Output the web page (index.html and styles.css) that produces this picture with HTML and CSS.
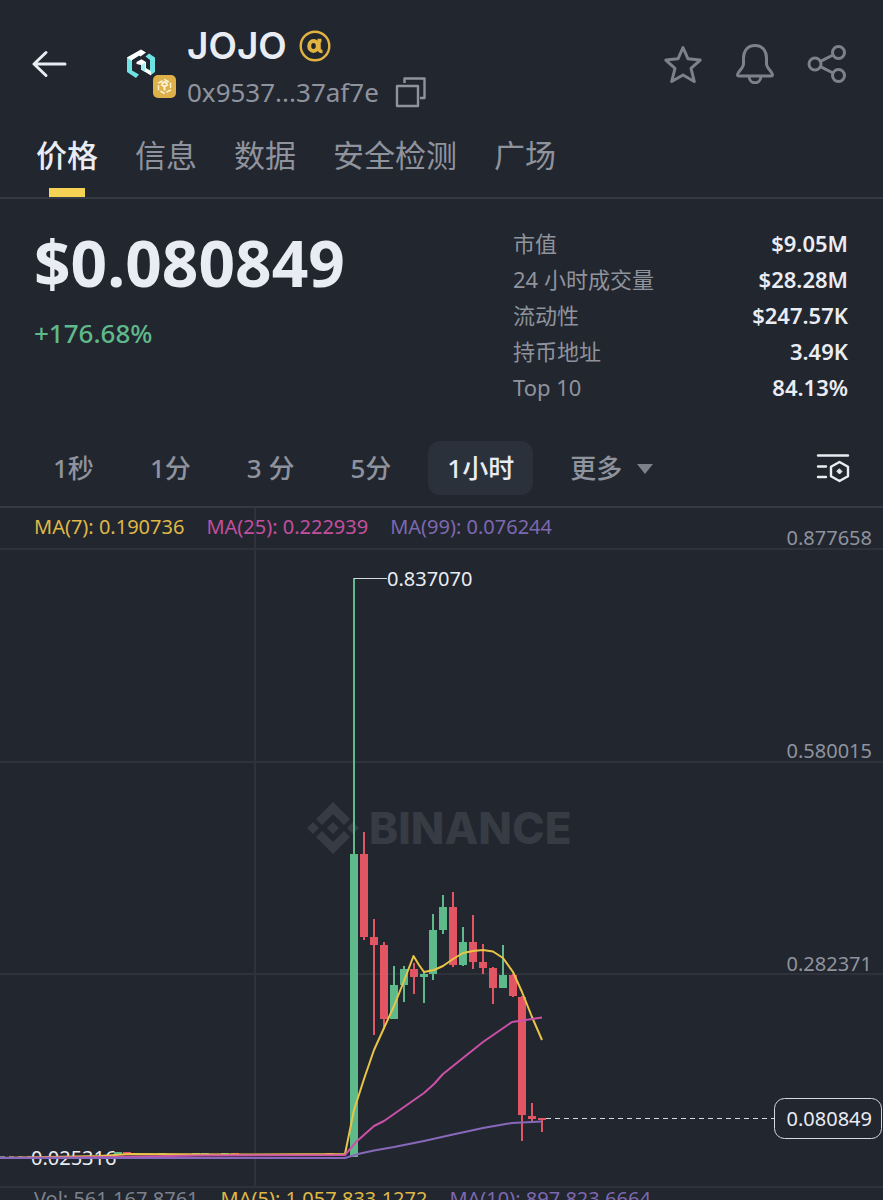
FILE: index.html
```html
<!DOCTYPE html>
<html lang="zh-CN">
<head>
  <meta charset="UTF-8" />
  <meta name="viewport" content="width=device-width, initial-scale=1" />
  <title>JOJO 价格</title>
  <link rel="stylesheet" href="styles.css">
</head>
<body>
  <header class="header">
    <button class="icon-btn" aria-label="返回">
      <svg width="36" height="32" viewBox="0 0 36 32" fill="none" stroke="#eaecf4" stroke-width="3" stroke-linecap="round" stroke-linejoin="round">
        <path d="M34 16H3M15 4.500L3 16l12 11.500"/>
      </svg>
    </button>

    <div class="token-logo">
      <svg width="28" height="30" viewBox="0 0 28 30">
        <path d="M0 8.500L14 1l3 2.500L5 11v10.500l7 4-3 3.500L0 23z" fill="#6fe3e4"/>
        <path d="M0 8.500L14 .5l5 3-5.500 4L12 6.500 5 11v1z" fill="#fff"/>
        <path d="M18.500 7.500l3.500-3 6 4v14.500l-4 3-5-3.500V20l4 1V11z" fill="#6fe3e4"/>
        <path d="M9.500 13l5-2.800 4.500 2.800v6l5 3.500v4L14 20.500V16l-4.500-1z" fill="#fff"/>
        <path d="M14 16v4.500l4 2.500V13.500z" fill="#a9eff0"/>
      </svg>
      <svg class="chain-badge" width="23" height="23" viewBox="0 0 23 23">
        <rect width="23" height="23" rx="5" fill="#ddb04a"/>
        <g fill="none" stroke="#fdf3d3" stroke-width="1.500">
          <path d="M11.500 4.500l6 3.500v7l-6 3.500-6-3.500V8z" stroke-dasharray="5 1.900"/>
          <path d="M8 9.500l3.500 2 3.500-2M11.500 11.500v4M8.500 8.500l3-1.500 3 1.500" stroke-width="2"/>
        </g>
      </svg>
    </div>

    <div class="token">
      <div class="token-name">
        <h1>JOJO</h1>
        <svg width="32" height="32" viewBox="0 0 32 32" fill="none" stroke="#e3b341">
          <circle cx="16" cy="16" r="14.300" stroke-width="2.400"/>
          <ellipse cx="14.500" cy="16" rx="4.300" ry="5" stroke-width="4"/>
          <path d="M18.500 10.500h4M20 10v8.500c0 2 1 3 3.500 3" stroke-width="3.500"/>
        </svg>
      </div>
      <div class="token-address">
        <span>0x9537...37af7e</span>
        <button class="icon-btn" aria-label="复制地址">
          <svg width="32" height="32" viewBox="0 0 32 32" fill="none" stroke="#8f939e" stroke-width="2.400" stroke-linejoin="round">
            <rect x="2" y="10" width="21" height="20"/>
            <path d="M9.500 7V2.500h20V22H25"/>
          </svg>
        </button>
      </div>
    </div>

    <div class="actions">
      <button class="icon-btn" aria-label="收藏">
        <svg width="40" height="40" viewBox="0 0 40 40">
          <path d="M20 3.500l5 11.300 12.200 1.300-9.200 8.200 3.300 13.200L20 31 8.700 37.500 12 24.300 2.800 16.100 15 14.800z"/>
        </svg>
      </button>
      <button class="icon-btn" aria-label="提醒">
        <svg width="40" height="40" viewBox="0 0 40 40">
          <path d="M20 1.500C12.500 1.500 8.500 7 8.500 14v6c0 4-6 8-6 10.500 0 1 .5 1.500 1.500 1.500h32c1 0 1.500-.5 1.500-1.500 0-2.500-6-6.500-6-10.500v-6C31.500 7 27.500 1.500 20 1.500zM14 32c0 9 12 9 12 0"/>
        </svg>
      </button>
      <button class="icon-btn" aria-label="分享">
        <svg width="40" height="40" viewBox="0 0 40 40">
          <circle cx="8" cy="20" r="6"/>
          <circle cx="31.500" cy="8.500" r="6"/>
          <circle cx="31.500" cy="31.500" r="6"/>
          <path d="M13.500 17.300l12.500-6.300M13.500 22.700L26 29"/>
        </svg>
      </button>
    </div>
  </header>

  <nav class="tabs">
    <a href="#price" class="active">价格</a>
    <a href="#info">信息</a>
    <a href="#data">数据</a>
    <a href="#audit">安全检测</a>
    <a href="#square">广场</a>
  </nav>

  <section class="summary">
    <div>
      <div class="price">$0.080849</div>
      <div class="change">+176.68%</div>
    </div>
    <dl class="stats">
      <div><dt>市值</dt><dd>$9.05M</dd></div>
      <div><dt>24 小时成交量</dt><dd>$28.28M</dd></div>
      <div><dt>流动性</dt><dd>$247.57K</dd></div>
      <div><dt>持币地址</dt><dd>3.49K</dd></div>
      <div><dt>Top 10</dt><dd>84.13%</dd></div>
    </dl>
  </section>

  <div class="toolbar">
    <button>1秒</button>
    <button>1分</button>
    <button>3 分</button>
    <button>5分</button>
    <button class="active">1小时</button>
    <button class="more">更多
      <svg width="16" height="12" viewBox="0 0 16 12"><path d="M0 1h16L8 11z" fill="#7c818c"/></svg>
    </button>
    <button class="icon-btn settings" aria-label="指标设置">
      <svg width="34" height="32" viewBox="0 0 34 32" fill="none" stroke="#eaecf4" stroke-width="2.400" stroke-linecap="round" stroke-linejoin="round">
        <path d="M2 3.500h30M2 14.500h8M2 25h8M23.500 10l8.500 4.800v9.400L23.500 29 15 24.200v-9.400z"/>
        <path d="M23.500 17l2.500 2.500-2.500 2.500-2.500-2.500z" fill="#eaecf4" stroke-width="1"/>
      </svg>
    </button>
  </div>

  <main class="chart">
    <div class="legend">
      <span class="yellow">MA(7): 0.190736</span>
      <span class="pink">MA(25): 0.222939</span>
      <span class="purple">MA(99): 0.076244</span>
    </div>

    <svg class="plot" viewBox="0 0 883 680">
      <!-- 网格 -->
      <path class="grid" d="M0 41H883M0 254H883M0 466H883M0 679H883M255 0V680"/>

      <!-- 水印 -->
      <g class="watermark">
        <path d="M333 294l17 17-6 6-11-11-11 11-6-6zM333 346l17-17-6-6-11 11-11-11-6 6zM333 314l6 6-6 6-6-6zM313 314l6 6-6 6-6-6zM353 314l6 6-6 6-6-6z"/>
        <text x="369" y="336">BINANCE</text>
      </g>

      <path class="dash" d="M0 649H31"/>
      <text class="mark" x="31" y="657">0.025316</text>

      <g id="candles"></g>

      <g class="ma">
        <path stroke="#e8c547" d="M0 650L100 648 130 646 240 646.500 345 646 354 602 364 571 374 542 384 520 394 498 404 473 413.500 448 419 457 424 464 434 462 443 458 453 451 463 445 473 443 483 442 493 443.500 503 450 513 464 522 484 532 509 542 532"/>
        <path stroke="#cb51a8" d="M0 650L110 649 200 647.500 345 647 356 634 374 618 384 613 404 599 424 585 434 576 443 566 463 550 483 534 512 514 522 512.500 542 509.500"/>
        <path stroke="#8868bb" d="M0 650H345L358 646 374 642.500 394 639 424 633 453 626.500 483 620 512 615 542 613.500"/>
      </g>

      <path class="peak" d="M354 70.500H387"/>
      <text class="mark" x="387" y="78">0.837070</text>

      <path class="dash" d="M546 610.500H774"/>
      <rect class="tag" x="774.500" y="590.500" width="107" height="40" rx="10"/>
      <text class="mark" x="872" y="618" text-anchor="end">0.080849</text>

      <g class="axis">
        <text x="872" y="37">0.877658</text>
        <text x="872" y="250">0.580015</text>
        <text x="872" y="463">0.282371</text>
      </g>
    </svg>

    <div class="legend volume">
      <span>Vol: 561,167.8761</span>
      <span class="yellow">MA(5): 1,057,833.1272</span>
      <span class="purple">MA(10): 897,823.6664</span>
    </div>
  </main>

  <script>
    // [x, 最高, 实体上沿, 实体下沿, 最低, 涨/跌]
    const candles = [
      [354, 70, 346, 649, 649, 'up'],
      [364, 324, 346, 429, 432, 'down'],
      [374, 411, 429, 437, 527, 'down'],
      [384, 434, 437, 511, 521, 'down'],
      [394, 458, 477, 511, 511, 'up'],
      [404, 458, 461, 477, 494, 'up'],
      [414, 455, 461, 469, 486, 'down'],
      [424, 464, 466, 469, 495, 'up'],
      [433, 406, 422, 466, 472, 'up'],
      [443, 387, 399, 422, 426, 'up'],
      [453, 384, 399, 457, 459, 'down'],
      [463, 419, 434, 457, 458, 'up'],
      [473, 407, 434, 454, 461, 'down'],
      [483, 436, 454, 460, 466, 'down'],
      [493, 459, 460, 480, 496, 'down'],
      [503, 437, 467, 480, 480, 'up'],
      [513, 466, 467, 488, 489, 'down'],
      [522, 488, 489, 607, 633, 'down'],
      [532, 595, 608, 611, 614, 'down'],
      [542, 610, 610, 612, 624, 'down'],
      // 上线初期几乎无波动
      [118, 644, 644, 646, 646, 'up'],
      [127, 644, 644, 646, 646, 'down'],
      [162, 645, 645, 647, 647, 'up'],
      [196, 645, 645, 647, 647, 'up'],
      [205, 645, 645, 647, 647, 'up'],
      [225, 645, 645, 647, 647, 'up'],
      [235, 645, 645, 647, 647, 'down'],
      [270, 646, 646, 648, 648, 'up'],
      [330, 645, 645, 647, 647, 'down']
    ];

    document.getElementById('candles').innerHTML = candles.map(([x, high, top, bottom, low, dir]) =>
      `<g class="${dir}">
        <rect x="${x - 1}" y="${high}" width="2" height="${low - high}"/>
        <rect x="${x - 4}" y="${top}" width="8" height="${bottom - top}"/>
      </g>`
    ).join('');
  </script>
</body>
</html>
```
FILE: styles.css
```css
* {
  box-sizing: border-box;
}

body {
  margin: 0;
  height: 100vh;
  overflow: hidden;
  background: #22262e;
  color: #eaecf4;
  font-family: "Noto Sans", "Noto Sans CJK SC", sans-serif;
}

button {
  padding: 0;
  border: 0;
  background: none;
  color: inherit;
  font: inherit;
  cursor: pointer;
}

.icon-btn {
  display: flex;
}

/* 顶部 */
.header {
  display: flex;
  align-items: center;
  height: 124px;
  padding: 4px 36px 0 31px;
}

.token-logo {
  position: relative;
  margin-left: 60px;
}

.token-logo svg {
  display: block;
}

.token-logo .chain-badge {
  position: absolute;
  left: 26px;
  top: 26px;
}

.token {
  margin: 8px 0 0 32px;
}

.token-name,
.token-address {
  display: flex;
  align-items: center;
  gap: 12px;
}

.token-name h1 {
  margin: 0;
  font: 600 37px/48px Inter, sans-serif;
}

.token-address {
  gap: 16px;
  color: #8f939e;
  font-size: 26px;
  line-height: 44px;
}

.actions {
  display: flex;
  gap: 32px;
  margin-left: auto;
  fill: none;
  stroke: #7c818c;
  stroke-width: 3;
  stroke-linejoin: round;
}

/* 标签页 */
.tabs {
  display: flex;
  gap: 37px;
  padding: 0 36px;
  border-bottom: 2px solid #343a44;
}

.tabs a {
  position: relative;
  height: 73px;
  color: #8f939e;
  font-size: 31px;
  line-height: 62px;
  text-decoration: none;
}

.tabs .active {
  color: #eaecf4;
  font-weight: 500;
}

.tabs .active::after {
  content: "";
  position: absolute;
  left: 50%;
  bottom: 0;
  width: 36px;
  height: 9px;
  margin-left: -18px;
  background: #f3d254;
}

/* 价格概览 */
.summary {
  display: flex;
  justify-content: space-between;
  height: 231px;
  padding: 26px 35px 0 34px;
}

.price {
  font-size: 64px;
  font-weight: 700;
  line-height: 76px;
}

.change {
  margin-top: 14px;
  color: #5fba8b;
  font-size: 26px;
  font-weight: 500;
  line-height: 36px;
}

.stats {
  flex: 0 0 335px;
  margin: 0;
  font-size: 22px;
  line-height: 36px;
}

.stats div {
  display: flex;
  justify-content: space-between;
}

.stats dt {
  color: #8f939e;
}

.stats dd {
  margin: 0;
  font-weight: 600;
}

/* 时间周期 */
.toolbar {
  display: flex;
  align-items: center;
  gap: 18px;
  height: 78px;
  padding: 0 33px 0 34px;
  border-bottom: 2px solid #343a44;
}

.toolbar button {
  padding: 0 19px;
  border-radius: 12px;
  color: #8f939e;
  font-size: 26px;
  font-weight: 500;
  line-height: 54px;
}

.toolbar .active {
  background: #2a313b;
  color: #eaecf4;
}

.toolbar .more svg {
  margin-left: 8px;
  vertical-align: 3px;
}

.toolbar .settings {
  margin-left: auto;
  padding: 0;
}

/* K 线图 */
.chart {
  position: relative;
}

.legend {
  position: absolute;
  top: 5px;
  left: 34px;
  display: flex;
  gap: 22px;
  color: #7c818c;
  font-size: 20px;
  line-height: 28px;
  white-space: nowrap;
}

.volume {
  position: static;
  padding: 0 34px;
  line-height: 22px;
}

.yellow {
  color: #dfb846;
}

.pink {
  color: #c24f9f;
}

.purple {
  color: #7d68b0;
}

.plot {
  display: block;
  width: 100%;
  font-size: 20px;
}

.grid {
  fill: none;
  stroke: #2d323b;
  stroke-width: 2;
}

.watermark {
  fill: #363b44;
}

.watermark text {
  font: 800 44px Inter, sans-serif;
}

.axis {
  fill: #8f939e;
  text-anchor: end;
}

.mark {
  fill: #eaecf4;
}

.up {
  fill: #5fba8b;
}

.down {
  fill: #e25563;
}

.ma {
  fill: none;
  stroke-width: 2;
  stroke-linejoin: round;
}

.peak,
.dash {
  stroke: #d5d8df;
}

.dash {
  stroke-dasharray: 5 4;
}

.tag {
  fill: #22262e;
  stroke: #d5d8df;
}
```
